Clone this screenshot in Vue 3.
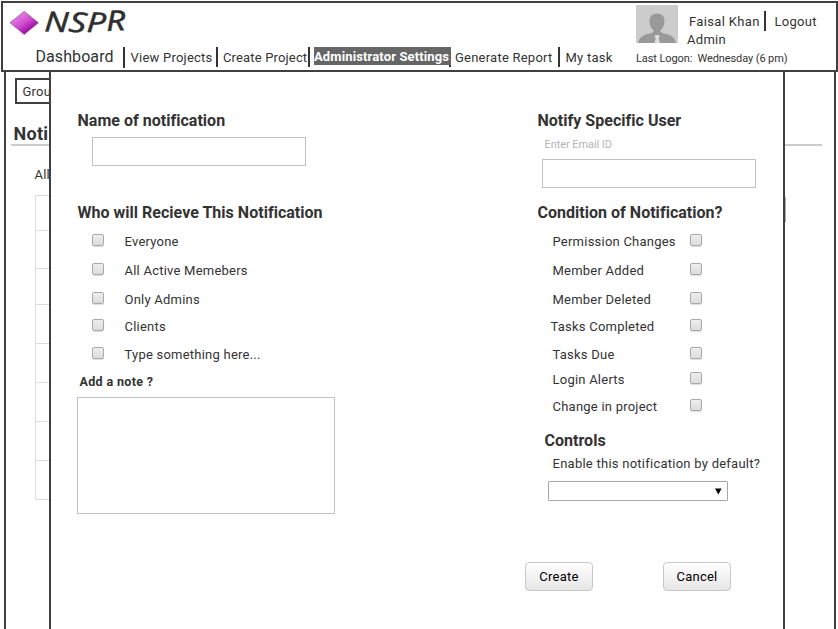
<script setup>
const nav = [
  { label: 'Dashboard', cls: 'home' },
  { label: 'View Projects', cls: 'view' },
  { label: 'Create Project', cls: 'create' },
  { label: 'Administrator Settings', cls: 'admin' },
  { label: 'Generate Report', cls: 'report' },
  { label: 'My task', cls: 'task' },
]
const receivers = [
  { label: 'Everyone', height: 29 },
  { label: 'All Active Memebers', height: 29 },
  { label: 'Only Admins', height: 27 },
  { label: 'Clients', height: 28 },
  { label: 'Type something here...', height: 27 },
]
const conditions = [
  { label: 'Permission Changes', height: 29 },
  { label: 'Member Added', height: 29 },
  { label: 'Member Deleted', height: 27 },
  { label: 'Tasks Completed', height: 28, outdent: true },
  { label: 'Tasks Due', height: 25 },
  { label: 'Login Alerts', height: 27 },
  { label: 'Change in project', height: 26 },
]
const rowHeights = [35, 38, 36, 39, 39, 39, 39, 39]
</script>

<template>
  <div class="screen">
    <header class="header">
      <div class="main">
        <div class="brand">
          <svg class="gem" width="30" height="26" viewBox="0 0 30 26">
            <defs>
              <linearGradient id="gem" x1="0.25" y1="0.2" x2="0.75" y2="0.8">
                <stop offset="0" stop-color="#e67be6" />
                <stop offset="0.5" stop-color="#cf4ccf" />
                <stop offset="1" stop-color="#9d079d" />
              </linearGradient>
            </defs>
            <path d="M1 12.8 15.2 1.4 29.4 12.8 15.2 24.4Z" fill="url(#gem)" stroke="#8d5b96" stroke-width=".8" />
          </svg>
          <svg class="word" width="90" height="30" viewBox="0 0 90 30">
            <text transform="scale(1.22 1)" x="0.8 20.500 35.500 52" y="21.500 21.500 22 21" rotate="2 6 2 -3">NSPR</text>
          </svg>
        </div>
        <nav class="nav">
          <a v-for="n in nav" :key="n.cls" :class="n.cls"><span>{{ n.label }}</span></a>
        </nav>
      </div>
      <div class="account">
        <div class="who">
          <svg width="42" height="38" viewBox="0 0 42 38">
            <rect width="42" height="38" fill="#ccc" />
            <path d="M21 8.500c-5 0-7.800 3.300-7.500 8 .2 4.200 2 7.300 4.300 9.200-.3 1.700-2 2.300-6.300 3.400C6.500 30.400 3.500 32.500 2 38h38c-1.500-5.500-4.500-7.600-9.500-8.900-4.300-1.100-6-1.700-6.300-3.400 2.300-1.900 4.100-5 4.300-9.200.3-4.700-2.500-8-7.500-8z" fill="#999" />
            <path d="M18.500 31.200l1.300-1.200h2.800l1.300 1.200-1.300 2.200L24 38h-5.600l1.400-4.600z" fill="#ddd" />
          </svg>
          <div class="id">
            <div class="line"><span class="name">Faisal Khan</span><i class="bar"></i><span class="logout">Logout</span></div>
            <div class="role">Admin</div>
          </div>
        </div>
        <div class="logon">Last Logon:&nbsp; <span>Wednesday (6 pm)</span></div>
      </div>
    </header>

    <div class="stage">
      <section class="page">
        <div class="tab">Grou</div>
        <h1>Noti</h1>
        <div class="filter">All</div>
        <div class="table">
          <div v-for="(h, i) in rowHeights" :key="i" class="tr" :style="{ height: h + 'px' }"></div>
        </div>
      </section>
      <i class="scroll"></i>

      <section class="modal">
        <div class="columns">
          <div class="left">
            <h2>Name of notification</h2>
            <div class="input"></div>
            <h2 class="second">Who will Recieve This Notification</h2>
            <div class="options">
              <div v-for="r in receivers" :key="r.label" class="option" :style="{ height: r.height + 'px' }">
                <i class="check"></i><span>{{ r.label }}</span>
              </div>
            </div>
            <h3>Add a note ?</h3>
            <div class="note"></div>
          </div>
          <div class="right">
            <h2>Notify Specific User</h2>
            <div class="hint">Enter Email ID</div>
            <div class="input email"></div>
            <h2 class="condition">Condition of Notification?</h2>
            <div class="options">
              <div v-for="c in conditions" :key="c.label" class="option" :class="{ outdent: c.outdent }" :style="{ height: c.height + 'px' }">
                <span>{{ c.label }}</span><i class="check"></i>
              </div>
            </div>
            <h2 class="controls">Controls</h2>
            <div class="enable">Enable this notification by default?</div>
            <div class="select">
              <svg width="7" height="7" viewBox="0 0 7 7"><path d="M0 .4h6.600L3.300 6.600z" fill="#000" /></svg>
            </div>
          </div>
        </div>
        <div class="actions">
          <button>Create</button>
          <button>Cancel</button>
        </div>
      </section>
    </div>
  </div>
</template>

<style>
body { margin: 0; background: #fff; }
</style>

<style scoped>
* { box-sizing: border-box; }
.screen {
  width: 838px; height: 629px; overflow: hidden; padding: 1px 0 0 1px;
  font: 13px/14px Roboto, "Liberation Sans", sans-serif; color: #333; letter-spacing: 0.23px;
  white-space: nowrap; background: #fff;
}
.header { width: 837px; height: 71px; border: 2px solid #404040; display: flex; background: #fff; }
.main { width: 633px; }
.brand { display: flex; height: 44px; padding: 7px 0 0 6px; }
.word { margin-left: 4px; overflow: visible; }
.word text { font: italic 400 28px "Noto Sans", sans-serif; fill: #2f2f2f; stroke: #2f2f2f; stroke-width: .4px; stroke-linejoin: round; letter-spacing: 0; }
.nav { display: flex; height: 23px; align-items: flex-start; }
.nav a { display: block; height: 20px; padding-top: 4px; border-right: 2px solid #333; margin-right: 5.500px; }
.nav .home { width: 122px; padding: 3px 0 0 32.500px; font-size: 16px; letter-spacing: 0.08px; height: 21px; }
.nav .view { width: 87.500px; }
.nav .create { width: 87px; margin-right: 5px; margin-left: -0.500px; letter-spacing: 0.16px; }
.nav .admin { width: 137px; margin-right: 4px; padding: 0; color: #fff; font-weight: 700; letter-spacing: 0.13px; margin-left: -1px; }
.nav .admin span { display: block; background: #666; height: 18px; line-height: 19px; width: 137px; }
.nav .report { width: 105px; margin-right: 5.500px; }
.nav .task { border: 0; }
.account { width: 200px; padding-top: 2px; }
.who { display: flex; height: 46px; }
.id { padding: 7px 0 0 9px; }
.line { display: flex; height: 19px; padding-left: 2px; line-height: 19px; }
.bar { width: 2px; height: 20px; background: #333; margin: -1px 8.500px 0 5px; }
.name { width: 70px; letter-spacing: 0.34px; }
.logout { letter-spacing: 0.3px; }
.role { line-height: 18px; letter-spacing: 0.3px; }
.logon { font-size: 11px; letter-spacing: -0.1px; line-height: 16px; }
.stage { position: relative; width: 832px; height: 557px; margin-left: 3px; }
.page { width: 832px; height: 560px; border: solid #404040; border-width: 0 2px; padding: 6px 0 0 5px; }
.tab { width: 60px; height: 26px; border: 2px solid #404040; margin-left: 4px; padding: 5px 0 0 5.500px; }
h1 { width: 811px; height: 42px; margin: 0; border-bottom: 2px solid #ccc; padding: 19px 0 0 2.500px; font-size: 18px; line-height: 22px; letter-spacing: 0.3px; }
.filter { padding: 22px 0 0 23.500px; height: 49px; }
.table { width: 700px; margin-left: 24px; border: 1px solid #ddd; border-width: 1px 0 0 1px; }
.tr { border-bottom: 1px solid #ddd; }
.scroll { position: absolute; left: 781px; top: 125px; width: 1px; height: 25px; background: #aaa; }
.modal { position: absolute; left: 45px; top: 0; width: 736px; height: 560px; border: solid #404040; border-width: 0 2px; background: #fff; padding: 38px 0 0 27px; }
.columns { display: grid; grid-template-columns: 460px 1fr; height: 452px; }
.columns > div { min-width: 0; }
h2 { margin: 0 0 0 -0.500px; height: 20px; font-size: 16px; line-height: 22px; font-weight: 700; letter-spacing: 0.02px; }
.input { width: 214px; height: 29px; border: 1px solid #c2c2c2; margin: 7px 0 0 14px; }
.second { margin-top: 36px; }
.options { margin-top: 12px; }
.option { display: flex; align-items: flex-start; }
.option span { line-height: 16px; }
.check { width: 12px; height: 12px; border: 1px solid #aaa; border-radius: 2px; background: linear-gradient(#eee, #dcdcdc); box-shadow: 0 1px 1px #ddd; }
.left .check { margin: 0 20.500px 0 14px; }
.right .option span { width: 137.500px; margin-left: 14.500px; }
.right .outdent span { width: 139.500px; margin-left: 12.500px; }
h3 { margin: 0 0 0 1.500px; font-size: 12.500px; line-height: 16px; height: 23px; letter-spacing: 0.34px; }
.note { width: 258px; height: 117px; border: 1px solid #c2c2c2; margin-left: -1px; }
.hint { font-size: 11px; letter-spacing: -0.08px; color: #b5b5b5; margin-left: 6.500px; height: 29px; padding-top: 8px; }
.email { margin: 0 0 0 4px; }
.condition { margin-top: 14px; }
.controls { margin: 5px 0 0 6.500px; }
.enable { margin: 7px 0 0 14.500px; height: 24px; letter-spacing: 0.25px; }
.select { width: 180px; height: 20px; border: 1px solid #a6a6a6; border-radius: 1px; margin-left: 10px; display: flex; align-items: center; justify-content: flex-end; padding-right: 5px; }
.actions { display: flex; gap: 70px; padding-left: 447px; }
button { width: 68px; height: 29px; border: 1px solid #c8c8c8; border-radius: 4px; background: linear-gradient(#fff, #e6e6e6); font: inherit; letter-spacing: 0.24px; color: #000; padding: 0; }
</style>
